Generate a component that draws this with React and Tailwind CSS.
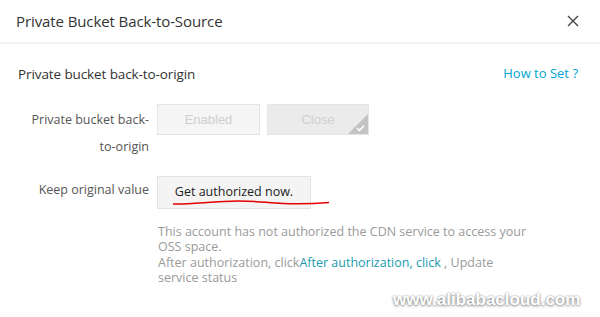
import React from "react";

export default function App() {
  return (
    <div className="relative w-[600px] h-[317px] bg-white overflow-hidden" style={{ fontFamily: '"Open Sans", "Noto Sans", sans-serif' }}>
      <div className="flex items-center justify-between h-[44px] pl-[16px] pr-[20px] border-b-2 border-[#f2f2f2]">
        <div className="text-[15px] text-[#333] leading-[20px] tracking-[-0.1px]">Private Bucket Back-to-Source</div>
        <svg width="12" height="12" viewBox="0 0 12 12" className="mr-[1px]">
          <path d="M1 1L11 11M11 1L1 11" stroke="#444" strokeWidth="1.4" />
        </svg>
      </div>
      <div className="flex items-center justify-between pl-[18px] pr-[22px] mt-[20px] h-[20px]">
        <div className="text-[13.5px] text-[#333] tracking-[-0.1px]">Private bucket back-to-origin</div>
        <div className="text-[13px] text-[#00a6cf]">How to Set ?</div>
      </div>
      <div className="flex mt-[20px]">
        <div className="w-[157px] shrink-0 pl-[28px] pr-[8px] text-right text-[12.5px] text-[#555] leading-[27px] pt-[1.5px]">
          Private bucket back-to-origin
        </div>
        <div className="flex gap-[7px] items-start">
          <div className="w-[103px] h-[31px] border border-[#e5e5e5] bg-[#f5f5f5] flex items-center justify-center text-[13px] text-[#cfcfcf]" style={{ fontFamily: '"Liberation Sans", Arial, sans-serif' }}>Enabled</div>
          <div className="relative w-[102px] h-[31px] border border-[#e5e5e5] bg-[#ebebeb] flex items-center justify-center text-[13px] text-[#d0d0d0] overflow-hidden" style={{ fontFamily: '"Liberation Sans", Arial, sans-serif' }}>
            Close
            <svg width="20" height="20" viewBox="0 0 20 20" className="absolute right-0 bottom-0">
              <path d="M20 0L20 20L0 20Z" fill="#c3c3c3" />
              <path d="M9 14L11.5 16.5L16 11.5" stroke="#fff" strokeWidth="1.6" fill="none" />
            </svg>
          </div>
        </div>
      </div>
      <div className="flex mt-[16px] items-center">
        <div className="w-[157px] shrink-0 pr-[8px] text-right text-[12.5px] text-[#555] pb-[3px]">Keep original value</div>
        <div className="relative">
          <div className="w-[154px] h-[33px] border border-[#e3e3e3] bg-[#f4f4f4] flex items-center justify-center text-[12.5px] text-[#222]">Get authorized now.</div>
          <svg width="160" height="8" viewBox="0 0 160 8" className="absolute left-[16px] top-[24px]">
            <path d="M0 4 C20 4.5, 40 1, 66 1 C85 1, 95 3, 110 3.5 C130 4, 150 3, 156 2.5" stroke="#e60000" strokeWidth="1.5" fill="none" />
          </svg>
        </div>
      </div>
      <div className="ml-[158px] mt-[15px] w-[374px] text-[12.5px] leading-[15.5px] text-[#9a9a9a]">
        <div>This account has not authorized the CDN service to access your OSS space.</div>
        <div>After authorization, click<span className="text-[#1a9bb0]">After authorization, click</span> , Update service status</div>
      </div>
      <div className="absolute left-[393px] top-[287px] text-[17px] font-bold text-white" style={{ fontFamily: '"Liberation Sans", Arial, sans-serif', textShadow: "0 1px 3px rgba(0,0,0,0.45), 0 0 2px rgba(0,0,0,0.3)" }}>
        www.alibabacloud.com
      </div>
    </div>
  );
}
